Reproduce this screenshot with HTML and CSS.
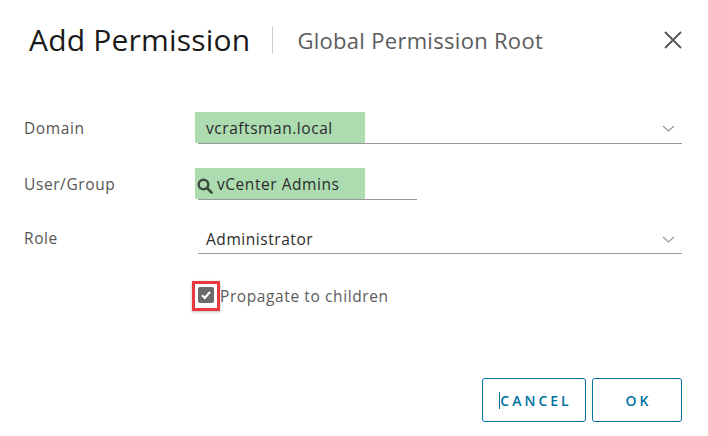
FILE: index.html
```html
<!DOCTYPE html>
<html>
<head>
<meta charset="utf-8">
<link rel="stylesheet" href="styles.css">
</head>
<body>
<div class="modal">
  <div class="header">
    <h1 class="title">Add Permission</h1>
    <span class="divider"></span>
    <span class="subtitle">Global Permission Root</span>
    <svg class="close" width="18" height="18" viewBox="0 0 18 18"><path d="M1 1 L17 17 M17 1 L1 17" stroke="#555" stroke-width="1.8" fill="none"/></svg>
  </div>
  <div class="form">
    <div class="row">
      <label class="label">Domain</label>
      <div class="field select">
        <span class="hl"></span>
        <span class="value">vcraftsman.local</span>
        <svg class="chev" width="13" height="7" viewBox="0 0 13 7"><path d="M1 1 L6.5 6 L12 1" stroke="#9a9a9a" stroke-width="1.2" fill="none"/></svg>
      </div>
    </div>
    <div class="row">
      <label class="label">User/Group</label>
      <div class="field search">
        <span class="hl"></span>
        <svg class="mag" width="16" height="16" viewBox="0 0 16 16"><circle cx="6.5" cy="6.5" r="4.8" stroke="#3d4a3f" stroke-width="2.4" fill="none"/><path d="M10 10 L14.5 14.5" stroke="#3d4a3f" stroke-width="2.6" stroke-linecap="round"/></svg>
        <span class="value">vCenter Admins</span>
      </div>
    </div>
    <div class="row role-row">
      <label class="label">Role</label>
      <div class="field select">
        <span class="value">Administrator</span>
        <svg class="chev" width="13" height="7" viewBox="0 0 13 7"><path d="M1 1 L6.5 6 L12 1" stroke="#9a9a9a" stroke-width="1.2" fill="none"/></svg>
      </div>
    </div>
    <div class="row check-row">
      <span class="label"></span>
      <div class="check">
        <span class="box">
          <span class="mark"></span>
          <svg width="16" height="16" viewBox="0 0 16 16"><path d="M4 8.2 L6.8 11 L12 5" stroke="#fff" stroke-width="2.2" fill="none"/></svg>
        </span>
        <span class="check-label">Propagate to children</span>
      </div>
    </div>
  </div>
  <div class="footer">
    <button class="btn"><span class="caret"></span>CANCEL</button>
    <button class="btn">OK</button>
  </div>
</div>
</body>
</html>
```
FILE: styles.css
```css
html, body {
  margin: 0;
  padding: 0;
  background: #fff;
}
body {
  font-family: "Open Sans", sans-serif;
  color: #565656;
  width: 708px;
  height: 436px;
  overflow: hidden;
}
.modal {
  display: flex;
  flex-direction: column;
  height: 436px;
}
.header {
  display: flex;
  align-items: center;
  height: 80px;
  padding: 0 26px 0 29px;
}
.title {
  margin: 0;
  font-size: 30px;
  font-weight: 400;
  color: #1a1a1a;
  line-height: 1;
  letter-spacing: 0.2px;
}
.divider {
  width: 1px;
  height: 28px;
  background: #ccc;
  margin: 0 24px 0 22px;
}
.subtitle {
  font-size: 22px;
  color: #5c5c5c;
  font-weight: 400;
  letter-spacing: 0.3px;
  flex: 1;
}
.form {
  display: flex;
  flex-direction: column;
  gap: 24px;
  padding: 32px 26px 0 24px;
}
.row {
  display: flex;
  align-items: flex-end;
  height: 32px;
}
.label {
  width: 174px;
  font-size: 15.5px;
  letter-spacing: 0.6px;
  color: #565656;
  padding-bottom: 5px;
}
.field {
  position: relative;
  display: flex;
  align-items: center;
  height: 31px;
  border-bottom: 1px solid #9a9a9a;
  box-sizing: border-box;
  font-size: 15.5px;
  letter-spacing: 0.55px;
  color: #2b2b2b;
}
.select {
  width: 484px;
  padding-left: 8px;
}
.search {
  width: 219px;
  padding-left: 0;
}
.hl {
  position: absolute;
  left: -3px;
  top: -1px;
  width: 170px;
  height: 31px;
  background: #addcb1;
}
.value {
  position: relative;
  flex: 1;
}
.search .value {
  margin-left: 4px;
}
.mag {
  position: relative;
  margin-left: -1px;
  margin-top: 3px;
}
.chev {
  margin-right: 7px;
}
.role-row {
  margin-top: -2px;
}
.role-row .field {
  height: 29px;
}
.check-row {
  height: 30px;
  margin-top: 3px;
}
.check {
  display: flex;
  align-items: center;
  margin-left: -6px;
}
.box {
  position: relative;
  width: 22px;
  height: 24px;
  border: 3px solid #e8393e;
  box-shadow: 0 1px 3px rgba(0,0,0,0.25);
}
.mark {
  position: absolute;
  left: 3px;
  top: 3px;
  width: 16px;
  height: 16px;
  background: #6b6b6b;
  border-radius: 2px;
}
.box svg {
  position: absolute;
  left: 3px;
  top: 3px;
}
.check-label {
  font-size: 15.5px;
  letter-spacing: 0.6px;
  color: #5c5c5c;
}
.footer {
  margin-top: auto;
  display: flex;
  justify-content: flex-end;
  gap: 6px;
  padding: 0 26px 14px 0;
}
.btn {
  position: relative;
  height: 44px;
  border: 1px solid #0072a3;
  border-radius: 3px;
  background: #fff;
  color: #0072a3;
  font-family: "Open Sans", sans-serif;
  font-size: 14px;
  font-weight: 600;
  letter-spacing: 3px;
  padding: 0 0 0 3px;
}
.btn:first-child {
  width: 104px;
}
.btn:last-child {
  width: 90px;
}
.caret {
  display: inline-block;
  width: 1px;
  height: 17px;
  background: #0072a3;
  vertical-align: middle;
  margin-top: -2px;
}
```
